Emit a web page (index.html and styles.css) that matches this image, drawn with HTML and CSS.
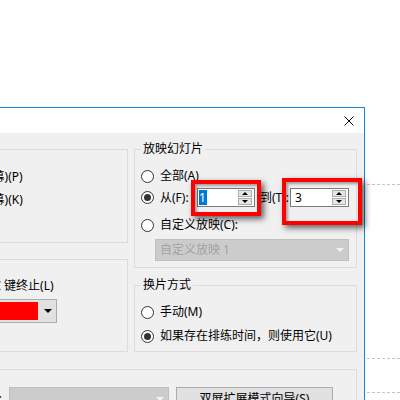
FILE: index.html
```html
<!DOCTYPE html>
<html lang="zh-CN">
<head>
<meta charset="utf-8">
<title>设置放映方式</title>
<link rel="stylesheet" href="styles.css">
</head>
<body>
<div class="screen">
  <div class="dialog">
    <div class="titlebar">
      <span class="title">设置放映方式</span>
      <svg class="close" viewBox="0 0 10 10" width="10" height="10"><path d="M0.5 0.5L9.5 9.5M9.5 0.5L0.5 9.5" stroke="#000" stroke-width="1" fill="none"/></svg>
    </div>
    <div class="body">
      <div class="columns">
        <div class="col">
          <fieldset class="group group-type">
            <legend>放映类型</legend>
            <label class="opt first"><span class="radio checked"></span>演讲者放映(全屏幕)(P)</label>
            <label class="opt second"><span class="radio"></span>在展台浏览(全屏幕)(K)</label>
          </fieldset>
          <fieldset class="group group-options">
            <legend>放映选项</legend>
            <label class="opt first"><span class="check"></span>循环放映，按 ESC 键终止(L)</label>
            <div class="pen-row">
              <span class="pen-label">绘图笔颜色(E):</span>
              <span class="color-combo"><span class="swatch"></span><span class="darrow"></span></span>
            </div>
          </fieldset>
        </div>
        <div class="col">
          <fieldset class="group group-slides">
            <legend>放映幻灯片</legend>
            <label class="opt first"><span class="radio"></span>全部(A)</label>
            <div class="opt range">
              <span class="radio checked"></span>
              <span class="lbl-from">从(F):</span>
              <span class="spin spin-from">
                <span class="val sel">1</span>
                <span class="spin-btns"><span class="sb up"></span><span class="sb down"></span></span>
                <span class="mark mark-from"></span>
              </span>
              <span class="lbl-to">到(T):</span>
              <span class="spin spin-to">
                <span class="val">3</span>
                <span class="spin-btns"><span class="sb up"></span><span class="sb down"></span></span>
                <span class="mark mark-to"></span>
              </span>
            </div>
            <label class="opt custom"><span class="radio"></span>自定义放映(C):</label>
            <div class="combo disabled custom-combo"><span>自定义放映 1</span><span class="darrow light"></span></div>
          </fieldset>
          <fieldset class="group group-advance">
            <legend>换片方式</legend>
            <label class="opt first"><span class="radio"></span>手动(M)</label>
            <label class="opt second-b"><span class="radio checked"></span>如果存在排练时间，则使用它(U)</label>
          </fieldset>
        </div>
      </div>
      <fieldset class="group group-monitor">
        <legend>多显示器</legend>
        <div class="monitor-row">
          <span class="mon-label">幻灯片放映到(O):</span>
          <span class="combo disabled mon-combo"><span class="darrow light"></span></span>
          <span class="btn">双屏扩展模式向导(S)</span>
        </div>
      </fieldset>
    </div>
  </div>
  <div class="strip">
    <div class="guide g1"></div>
    <div class="guide g2"></div>
    <div class="guide g3"></div>
  </div>
</div>
</body>
</html>
```

FILE: styles.css
```css
* { box-sizing: border-box; }
html, body { margin: 0; }
body {
  width: 400px;
  height: 400px;
  overflow: hidden;
  background: #ffffff;
  color: #000;
  font-family: "Noto Sans", "Noto Sans CJK SC", sans-serif;
  font-size: 12px;
  line-height: 16px;
}
.screen { display: flex; height: 400px; }

.dialog {
  flex: none;
  width: 496px;
  margin-left: -131px;
  margin-top: 107px;
  border-top: 1px solid #1883d7;
  border-right: 1px solid #1883d7;
  background: #f0f0f0;
}
.titlebar {
  height: 25px;
  background: #fff;
  display: flex;
  align-items: center;
  justify-content: space-between;
  padding: 0 10px 0 8px;
}
.close { display: block; width: 10px; height: 10px; }

.body { padding: 8px 7px 0 10px; }
.columns {
  display: grid;
  grid-template-columns: 249px 223px;
  column-gap: 6px;
}
.col { display: flex; flex-direction: column; }

.group {
  margin: 0;
  min-width: 0;
  border: 1px solid #dcdcdc;
  padding: 0 0 0 6px;
}
.group legend {
  padding: 0 2px;
  margin: 0;
  font-size: 12px;
  line-height: 16px;
}

.opt {
  display: flex;
  align-items: center;
  height: 20px;
  white-space: nowrap;
}
.radio {
  flex: none;
  width: 13px;
  height: 13px;
  border: 1px solid #333;
  border-radius: 50%;
  background: #fff;
  margin-right: 6px;
  display: flex;
  align-items: center;
  justify-content: center;
}
.radio.checked::after {
  content: "";
  width: 7px;
  height: 7px;
  border-radius: 50%;
  background: #333;
}
.check {
  flex: none;
  width: 13px;
  height: 13px;
  border: 1px solid #333;
  background: #fff;
  margin-right: 6px;
}

/* group: type */
.group-type { padding-bottom: 32px; }
.group-type .first { margin-top: 10px; }
.group-type .second { margin-top: 3px; }

/* group: options */
.group-options { margin-top: 8px; padding-bottom: 28px; }
.group-options .first { margin-top: 9px; }
.pen-row { display: flex; align-items: center; margin-top: 3px; height: 24px; white-space: nowrap; }
.pen-label { width: 91px; flex: none; }
.color-combo {
  flex: none;
  display: flex;
  align-items: center;
  width: 80px;
  height: 24px;
  border: 1px solid #adadad;
  background: #e1e1e1;
  padding-left: 2px;
}
.swatch { width: 58px; height: 18px; background: #ff0000; flex: none; }
.darrow {
  flex: none;
  width: 0;
  height: 0;
  border-left: 4px solid transparent;
  border-right: 4px solid transparent;
  border-top: 4px solid #000;
}
.color-combo .darrow { margin-left: 6px; }
.darrow.light { border-top-color: #f4f4f4; margin-left: auto; }

/* group: slides */
.group-slides { padding-bottom: 6px; }
.group-slides .first { margin-top: 9px; }
.range { height: 23px; }
.lbl-from { width: 37px; flex: none; }
.lbl-to { width: 30px; flex: none; margin-left: 5px; }
.spin {
  position: relative;
  flex: none;
  display: flex;
  align-items: center;
  height: 19px;
  border: 1px solid #7a7a7a;
  background: #fff;
}
.spin-from { width: 58px; }
.spin-to { width: 59px; }
.val { display: block; line-height: 15px; }
.val.sel { background: #0078d7; color: #fff; margin-left: 1px; padding: 0 1px 0 0; }
.spin-to .val { margin-left: 4px; }
.spin-btns {
  margin-left: auto;
  margin-right: 2px;
  display: flex;
  flex-direction: column;
  gap: 1px;
}
.sb {
  width: 14px;
  height: 7px;
  background: #e6e6e6;
  border: 1px solid #acacac;
  display: flex;
  align-items: center;
  justify-content: center;
}
.sb::after {
  content: "";
  width: 0;
  height: 0;
  border-left: 3px solid transparent;
  border-right: 3px solid transparent;
}
.sb.up::after { border-bottom: 3px solid #000; }
.sb.down::after { border-top: 3px solid #000; }

.mark {
  position: absolute;
  border: 4px solid #ff0000;
  box-shadow: 3px 3px 6px rgba(0, 0, 0, 0.6), inset 2px 2px 3px rgba(0, 0, 0, 0.35);
  pointer-events: none;
}
.mark-from { left: -7px; right: -7px; top: -9px; bottom: -10px; }
.mark-to { left: -9px; right: -14px; top: -11px; bottom: -19px; }

.custom { margin-top: 6px; }
.combo {
  display: flex;
  align-items: center;
  border: 1px solid #bfbfbf;
  background: #cccccc;
  color: #a3a3a3;
  white-space: nowrap;
}
.custom-combo {
  height: 22px;
  margin: 4px 0 0 14px;
  width: 194px;
  padding: 0 4px 0 4px;
}

/* group: advance */
.group-advance { margin-top: 9px; padding-bottom: 5px; }
.group-advance .first { margin-top: 9px; }
.group-advance .second-b { margin-top: 4px; }

/* group: monitor */
.group-monitor { margin-top: 9px; padding-bottom: 10px; }
.monitor-row { display: flex; align-items: center; margin-top: 10px; white-space: nowrap; }
.mon-label { width: 123px; flex: none; text-align: right; padding-right: 7px; }
.mon-combo { width: 160px; height: 23px; flex: none; padding-right: 4px; }
.btn {
  flex: none;
  width: 157px;
  height: 23px;
  margin-left: 7px;
  border: 1px solid #adadad;
  background: #e1e1e1;
  display: flex;
  align-items: center;
  justify-content: center;
}

/* guides outside the dialog */
.strip { flex: 1; padding-left: 2px; }
.guide { border-top: 1px dashed #c4c4c4; }
.g1 { margin-top: 184px; }
.g2 { margin-top: 173px; }
.g3 { margin-top: 33px; }
```
